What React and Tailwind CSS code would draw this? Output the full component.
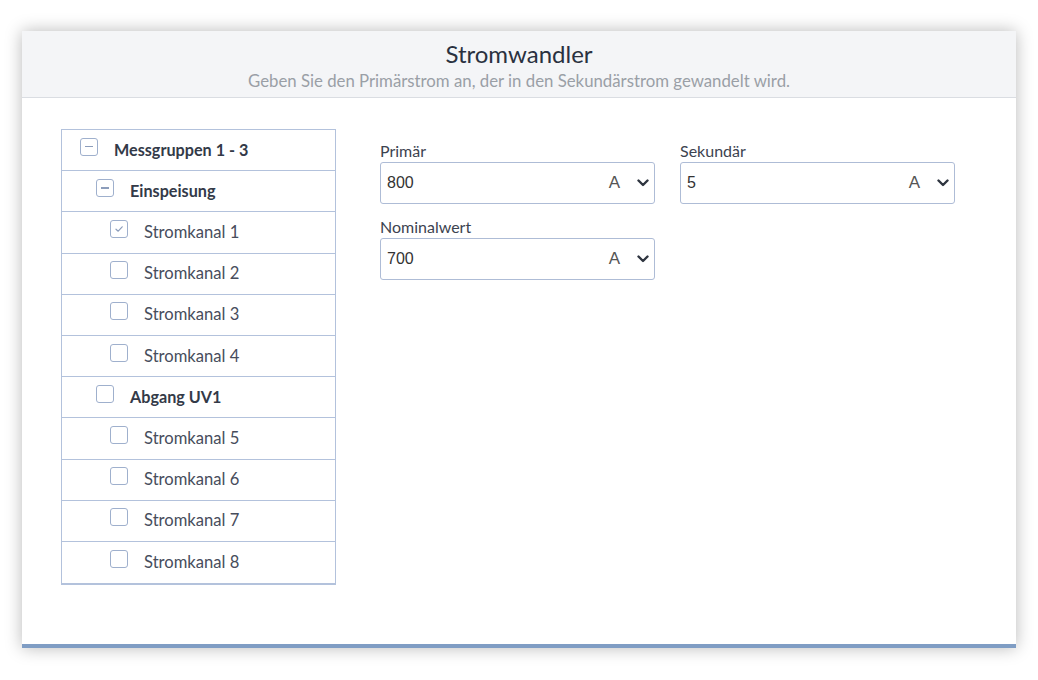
import { useState } from 'react'

const tree = [
  { label: 'Messgruppen 1 - 3', level: 0, bold: true, state: 'minus' },
  { label: 'Einspeisung', level: 1, bold: true, state: 'minus' },
  { label: 'Stromkanal 1', level: 2, state: 'checked' },
  { label: 'Stromkanal 2', level: 2 },
  { label: 'Stromkanal 3', level: 2 },
  { label: 'Stromkanal 4', level: 2 },
  { label: 'Abgang UV1', level: 1, bold: true },
  { label: 'Stromkanal 5', level: 2 },
  { label: 'Stromkanal 6', level: 2 },
  { label: 'Stromkanal 7', level: 2 },
  { label: 'Stromkanal 8', level: 2 },
]

const indent = ['pl-[18px]', 'pl-[34px]', 'pl-[48px]']

function Box({ state }) {
  return (
    <span className="mb-[7px] flex h-[18px] w-[18px] shrink-0 items-center justify-center rounded-[3px] border-[1.5px] border-[#9fb0cd] bg-white">
      {state === 'minus' && <span className="h-[1.5px] w-[8px] bg-[#8c9dbb]" />}
      {state === 'checked' && (
        <svg width="10" height="10" viewBox="0 0 10 10" fill="none">
          <path d="M2 5.2 4.2 7.2 8.2 2.8" stroke="#8c9dbb" strokeWidth="1.2" strokeLinecap="round" strokeLinejoin="round" />
        </svg>
      )}
    </span>
  )
}

function Chevron() {
  return (
    <svg width="12" height="8" viewBox="0 0 12 8" fill="none">
      <path d="M1.5 1.5 6 6 10.5 1.5" stroke="#2f3540" strokeWidth="2.4" strokeLinecap="round" strokeLinejoin="round" />
    </svg>
  )
}

function UnitField({ label, value }) {
  const [val, setVal] = useState(value)
  return (
    <label className="flex w-[275px] flex-col">
      <span className="mb-[1px] text-[16px] leading-[20px] text-[#3c4350]">{label}</span>
      <span className="flex h-[42px] items-center rounded-[3px] border border-[#aebcd6] bg-white pl-[6px] pr-[5px]">
        <input
          value={val}
          onChange={e => setVal(e.target.value)}
          className="min-w-0 flex-1 bg-transparent font-['Liberation_Sans',Arial,sans-serif] text-[16px] text-[#333] outline-none"
        />
        <span className="mr-[17px] font-['Liberation_Sans',Arial,sans-serif] text-[17px] text-[#555]">A</span>
        <Chevron />
      </span>
    </label>
  )
}

export default function App() {
  return (
    <div className="min-h-[680px] bg-white pl-[22px] pt-[31px] font-['Lato','Open_Sans',sans-serif]">
      <div className="w-[994px] bg-white shadow-[0_0_16px_rgba(0,0,0,0.28)]">
        <div className="flex h-[67px] flex-col items-center border-b border-[#dadde2] bg-[#f4f5f7] pt-[8px]">
          <h1 className="text-[24px] leading-[30px] text-[#2a3140]">Stromwandler</h1>
          <p className="mt-[2px] text-[16.8px] leading-[20px] text-[#9a9fa6]">
            Geben Sie den Primärstrom an, der in den Sekundärstrom gewandelt wird.
          </p>
        </div>

        <div className="flex h-[550px] border-b-[4px] border-[#7f9dc4] pl-[39px] pt-[31px]">
          <div className="w-[275px] self-start border border-b-2 border-[#b3c2dc]">
            {tree.map((row, i) => (
              <div
                key={row.label}
                className={`flex h-[41.2px] items-center gap-[16px] ${indent[row.level]} ${
                  i < tree.length - 1 ? 'border-b border-[#b3c2dc]' : ''
                }`}
              >
                <Box state={row.state} />
                <span
                  className={
                    row.bold
                      ? 'text-[16.2px] font-bold text-[#333a48]'
                      : 'text-[16.6px] text-[#474d5c]'
                  }
                >
                  {row.label}
                </span>
              </div>
            ))}
          </div>

          <div className="ml-[44px] grid grid-cols-[275px_275px] content-start gap-x-[25px] gap-y-[13px] pt-[12px]">
            <UnitField label="Primär" value="800" />
            <UnitField label="Sekundär" value="5" />
            <UnitField label="Nominalwert" value="700" />
          </div>
        </div>
      </div>
    </div>
  )
}
